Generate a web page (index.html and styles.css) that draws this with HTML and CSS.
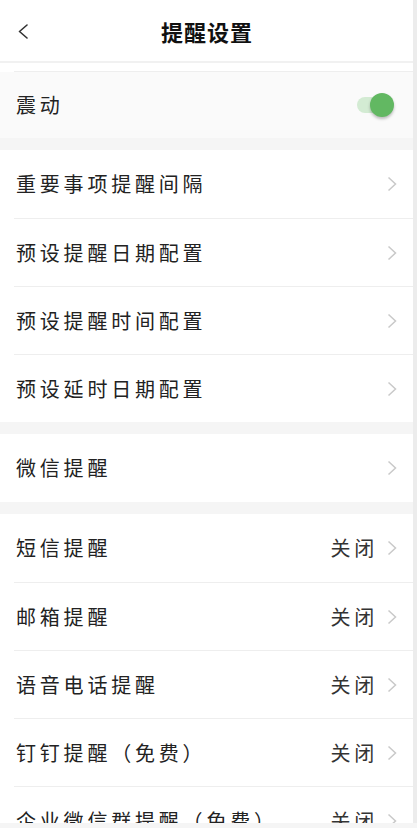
FILE: index.html
```html
<!DOCTYPE html>
<html lang="zh-CN">
<head>
<meta charset="utf-8">
<title>提醒设置</title>
<link rel="stylesheet" href="styles.css">
</head>
<body>
<div class="screen">
  <div class="page">
    <header class="topbar">
      <span class="back">
        <svg width="12" height="15" viewBox="0 0 12 15"><polyline points="10,1 2.5,7.5 10,14" fill="none" stroke="#333" stroke-width="1.6" stroke-linecap="round" stroke-linejoin="round"/></svg>
      </span>
      <h1 class="title">提醒设置</h1>
    </header>
    <div class="peek"><div class="peek-line"></div></div>
    <section class="group group-soft">
      <div class="row">
        <span class="label">震动</span>
        <span class="switch"><span class="knob"></span></span>
      </div>
    </section>
    <section class="group">
      <div class="row"><span class="label">重要事项提醒间隔</span><span class="chev"><svg width="10" height="16" viewBox="0 0 10 16"><polyline points="1.5,1.5 8.5,8 1.5,14.5" fill="none" stroke="#c9c9c9" stroke-width="1.5"/></svg></span></div>
      <div class="row"><span class="label">预设提醒日期配置</span><span class="chev"><svg width="10" height="16" viewBox="0 0 10 16"><polyline points="1.5,1.5 8.5,8 1.5,14.5" fill="none" stroke="#c9c9c9" stroke-width="1.5"/></svg></span></div>
      <div class="row"><span class="label">预设提醒时间配置</span><span class="chev"><svg width="10" height="16" viewBox="0 0 10 16"><polyline points="1.5,1.5 8.5,8 1.5,14.5" fill="none" stroke="#c9c9c9" stroke-width="1.5"/></svg></span></div>
      <div class="row"><span class="label">预设延时日期配置</span><span class="chev"><svg width="10" height="16" viewBox="0 0 10 16"><polyline points="1.5,1.5 8.5,8 1.5,14.5" fill="none" stroke="#c9c9c9" stroke-width="1.5"/></svg></span></div>
    </section>
    <section class="group">
      <div class="row"><span class="label">微信提醒</span><span class="chev"><svg width="10" height="16" viewBox="0 0 10 16"><polyline points="1.5,1.5 8.5,8 1.5,14.5" fill="none" stroke="#c9c9c9" stroke-width="1.5"/></svg></span></div>
    </section>
    <section class="group">
      <div class="row"><span class="label">短信提醒</span><span class="value">关闭</span><span class="chev"><svg width="10" height="16" viewBox="0 0 10 16"><polyline points="1.5,1.5 8.5,8 1.5,14.5" fill="none" stroke="#c9c9c9" stroke-width="1.5"/></svg></span></div>
      <div class="row"><span class="label">邮箱提醒</span><span class="value">关闭</span><span class="chev"><svg width="10" height="16" viewBox="0 0 10 16"><polyline points="1.5,1.5 8.5,8 1.5,14.5" fill="none" stroke="#c9c9c9" stroke-width="1.5"/></svg></span></div>
      <div class="row"><span class="label">语音电话提醒</span><span class="value">关闭</span><span class="chev"><svg width="10" height="16" viewBox="0 0 10 16"><polyline points="1.5,1.5 8.5,8 1.5,14.5" fill="none" stroke="#c9c9c9" stroke-width="1.5"/></svg></span></div>
      <div class="row"><span class="label">钉钉提醒（免费）</span><span class="value">关闭</span><span class="chev"><svg width="10" height="16" viewBox="0 0 10 16"><polyline points="1.5,1.5 8.5,8 1.5,14.5" fill="none" stroke="#c9c9c9" stroke-width="1.5"/></svg></span></div>
      <div class="row"><span class="label">企业微信群提醒（免费）</span><span class="value">关闭</span><span class="chev"><svg width="10" height="16" viewBox="0 0 10 16"><polyline points="1.5,1.5 8.5,8 1.5,14.5" fill="none" stroke="#c9c9c9" stroke-width="1.5"/></svg></span></div>
    </section>
  </div>
  <div class="rail"></div>
</div>
</body>
</html>
```
FILE: styles.css
```css
* { box-sizing: border-box; }
html, body {
  margin: 0;
  padding: 0;
  background: #f5f5f5;
}
body {
  width: 417px;
  height: 828px;
  overflow: hidden;
  font-family: "Noto Sans CJK SC", "Noto Sans", sans-serif;
  color: #222;
}
.screen {
  display: flex;
  width: 417px;
  height: 823px;
  overflow: hidden;
}
.page {
  flex: 0 0 413px;
  background: #f5f5f5;
  display: flex;
  flex-direction: column;
}
.rail {
  flex: 0 0 4px;
  background: #ececec;
}
.topbar {
  position: relative;
  height: 63px;
  flex: 0 0 63px;
  background: #fff;
  border-bottom: 2px solid #f1f1f1;
  display: flex;
  align-items: center;
  justify-content: center;
}
.back {
  position: absolute;
  left: 17px;
  top: 24px;
  width: 12px;
  height: 15px;
  display: flex;
}
.title {
  margin: 0;
  font-size: 22px;
  font-weight: 700;
  letter-spacing: 1px;
  line-height: 1;
  color: #111;
  padding-left: 1px;
}
.peek {
  flex: 0 0 9px;
  background: #fff;
  padding-left: 14px;
}
.peek-line {
  height: 9px;
  border-bottom: 1px solid #eee;
}
.group {
  margin-bottom: 12px;
  background: #fff;
  padding-left: 14px;
  display: flex;
  flex-direction: column;
}
.group-soft {
  background: #fafafa;
}
.group-soft .row {
  height: 66px;
  flex-basis: 66px;
  background: #fafafa;
}
.row {
  height: 68px;
  flex: 0 0 68px;
  display: flex;
  align-items: center;
  padding: 0 16px 0 2px;
  background: #fff;
}
.row + .row {
  border-top: 1px solid #eee;
}
.label {
  flex: 1;
  font-size: 20px;
  letter-spacing: 3.8px;
  line-height: 1;
  white-space: nowrap;
}
.value {
  font-size: 20px;
  letter-spacing: 3.8px;
  line-height: 1;
  color: #333;
  margin-right: 9px;
}
.chev {
  display: flex;
  width: 10px;
  height: 16px;
}
.switch {
  position: relative;
  width: 36px;
  height: 16px;
  border-radius: 8px;
  background: #d3ebd3;
  margin-right: 4px;
}
.knob {
  position: absolute;
  right: -1px;
  top: -4px;
  width: 24px;
  height: 24px;
  border-radius: 50%;
  background: #62b862;
  box-shadow: 0 2px 3px rgba(0,0,0,0.25);
}
```
